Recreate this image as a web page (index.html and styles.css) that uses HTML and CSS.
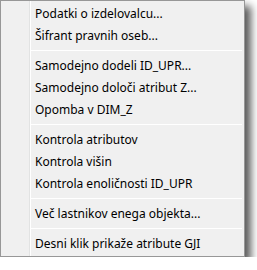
FILE: index.html
```html
<!DOCTYPE html>
<html>
<head>
<meta charset="utf-8">
<link rel="stylesheet" href="styles.css">
</head>
<body>
<div class="menu">
  <div class="item">Podatki o izdelovalcu...</div>
  <div class="item">Šifrant pravnih oseb...</div>
  <div class="sep"></div>
  <div class="item">Samodejno dodeli ID_UPR...</div>
  <div class="item">Samodejno določi atribut Z...</div>
  <div class="item">Opomba v DIM_Z</div>
  <div class="sep"></div>
  <div class="item">Kontrola atributov</div>
  <div class="item">Kontrola višin</div>
  <div class="item">Kontrola enoličnosti ID_UPR</div>
  <div class="sep"></div>
  <div class="item">Več lastnikov enega objekta...</div>
  <div class="sep"></div>
  <div class="item">Desni klik prikaže atribute GJI</div>
</div>
</body>
</html>
```
FILE: styles.css
```css
html, body {
  margin: 0;
  padding: 0;
  background: #ffffff;
}
.menu {
  width: 243px;
  height: 251px;
  border: 1px solid #979797;
  background-color: #f0f0f0;
  background-image: linear-gradient(to right, transparent 28px, #e2e3e3 28px, #e2e3e3 29px, #ffffff 29px, #ffffff 30px, transparent 30px);
  padding: 2px 0;
  box-shadow: 6px 6px 8px rgba(0, 0, 0, 0.65);
  font-family: "Noto Sans", "Open Sans", sans-serif;
  font-size: 12px;
  color: #000;
  display: flex;
  flex-direction: column;
}
.item {
  height: 22px;
  line-height: 22px;
  padding-left: 34px;
  white-space: nowrap;
}
.sep {
  height: 1px;
  margin: 3px 2px 4px 30px;
  background: #e0e0e0;
  border-bottom: 1px solid #ffffff;
}
```
